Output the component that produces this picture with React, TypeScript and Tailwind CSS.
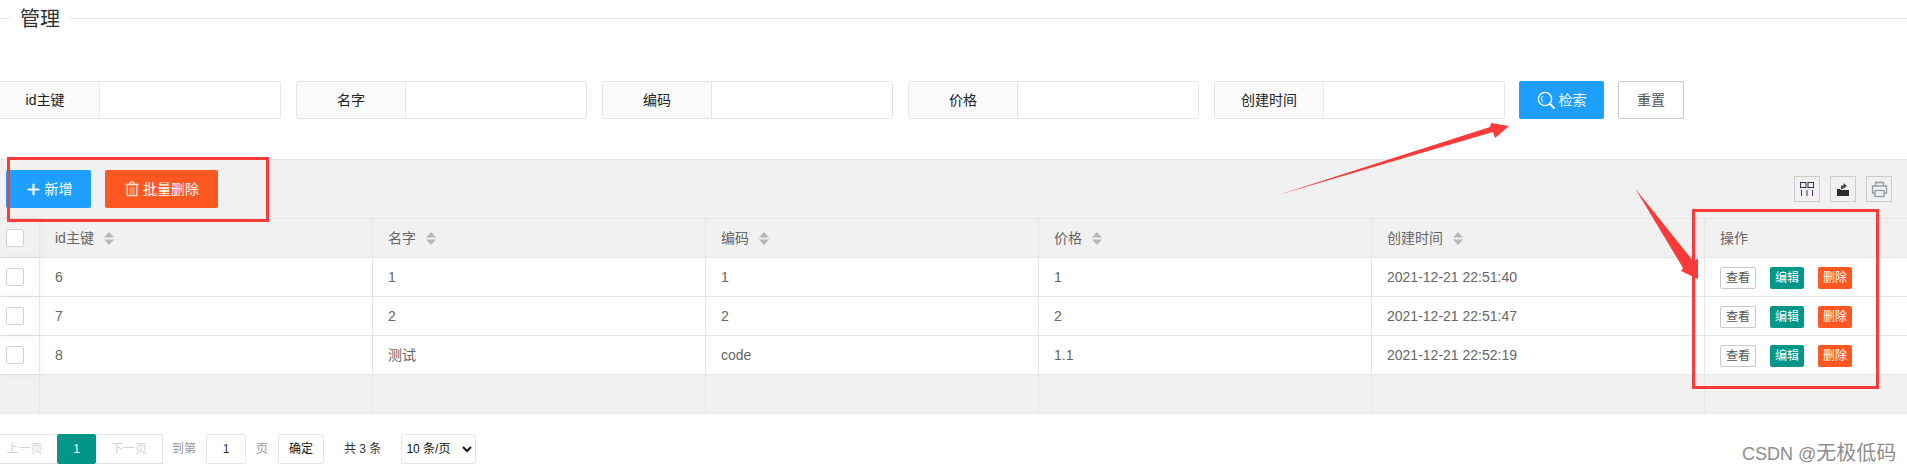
import { Plus } from 'lucide-react'

const filters = ['id主键', '名字', '编码', '价格', '创建时间']

const columns = ['id主键', '名字', '编码', '价格', '创建时间']

const rows = [
  ['6', '1', '1', '1', '2021-12-21 22:51:40'],
  ['7', '2', '2', '2', '2021-12-21 22:51:47'],
  ['8', '测试', 'code', '1.1', '2021-12-21 22:52:19'],
]

const gridCols = 'grid grid-cols-[40px_333px_333px_333px_333px_333px_1fr]'

function SortCaret() {
  return (
    <svg width="10" height="13" viewBox="0 0 10 13" className="ml-[10px] shrink-0">
      <path d="M5 0 L10 5.5 H0 Z" fill="#b8b8b8" />
      <path d="M5 13 L0 7.5 H10 Z" fill="#b8b8b8" />
    </svg>
  )
}

function Checkbox() {
  return <span className="block w-[18px] h-[18px] bg-white border border-[#d2d2d2] rounded-[2px] ml-[6px]" />
}

function FilterGroup({ label }: { label: string }) {
  return (
    <div className="flex w-[291px] h-[38px] shrink-0 border border-[#e6e6e6] rounded-[2px] bg-white">
      <label className="w-[109px] shrink-0 flex items-center justify-center bg-[#fafafa] border-r border-[#e6e6e6] text-[14px] text-[#222]">
        {label}
      </label>
      <input type="text" className="flex-1 min-w-0 outline-none" />
    </div>
  )
}

function ToolIcon({ children }: { children: React.ReactNode }) {
  return (
    <div className="w-[26px] h-[26px] border border-[#ccc] flex items-center justify-center">{children}</div>
  )
}

function Empty() {
  return (
    <>
      <div className="border-r border-[#e6e6e6]" />
      <div className="border-r border-[#e6e6e6]" />
      <div className="border-r border-[#e6e6e6]" />
      <div className="border-r border-[#e6e6e6]" />
      <div className="border-r border-[#e6e6e6]" />
      <div className="border-r border-[#e6e6e6]" />
      <div />
    </>
  )
}

export default function App() {
  return (
    <div className="relative w-[1907px] h-[471px] overflow-hidden bg-white font-['Liberation_Sans','Noto_Sans_CJK_SC',sans-serif]">
      {/* fieldset title */}
      <div className="flex items-center h-[37px]">
        <div className="w-[10px] h-px bg-[#e6e6e6]" />
        <span className="px-[10px] text-[20px] leading-[20px] text-[#333]">管理</span>
        <div className="flex-1 h-px bg-[#e6e6e6]" />
      </div>

      {/* search form */}
      <div className="flex items-center gap-[15px] -ml-[10px] mt-[44px] h-[38px]">
        {filters.map((f) => (
          <FilterGroup key={f} label={f} />
        ))}
        <div className="flex gap-[14px] -ml-px">
          <button className="w-[85px] h-[38px] bg-[#1e9fff] text-white text-[14px] rounded-[2px] flex items-center justify-center gap-[3px]">
            <svg width="19" height="19" viewBox="0 0 19 19" fill="none" stroke="#fff">
              <circle cx="8" cy="8" r="6.6" strokeWidth="1.3" />
              <path d="M12.8 12.8 L17.5 17.5" strokeWidth="2" />
              <path d="M6 4.8 A4 4 0 0 0 6 11" strokeWidth="1" />
            </svg>
            检索
          </button>
          <button className="w-[66px] h-[38px] bg-white border border-[#c9c9c9] text-[#555] text-[14px] rounded-[2px]">
            重置
          </button>
        </div>
      </div>

      {/* table toolbar */}
      <div className="mt-[40px] h-[60px] bg-[#f1f1f1] border-t border-b border-[#e6e6e6] flex items-center justify-between pl-[6px] pr-[15px]">
        <div className="flex gap-[14px]">
          <button className="w-[85px] h-[38px] bg-[#1e9fff] text-white text-[14px] rounded-[2px] flex items-center justify-center gap-[3px]">
            <Plus size={17} strokeWidth={3} />
            新增
          </button>
          <button className="w-[113px] h-[38px] bg-[#ff5722] text-white text-[14px] rounded-[2px] flex items-center justify-center gap-[3px]">
            <svg width="16" height="16" viewBox="0 0 16 16" fill="none" stroke="#ffe3d8">
              <path d="M1.5 3.5 H14.5" strokeWidth="1.6" />
              <path d="M5.5 3 L6.5 1.2 H9.5 L10.5 3" strokeWidth="1.2" />
              <path d="M3.2 4.5 V14.5 H12.8 V4.5" strokeWidth="1.3" />
              <path d="M6 6 V13 M8 6 V13 M10 6 V13" stroke="#ffc08a" strokeWidth="1" />
            </svg>
            批量删除
          </button>
        </div>
        <div className="flex gap-[10px]">
          <ToolIcon>
            <svg width="16" height="16" viewBox="0 0 16 16" fill="none">
              <rect x="1.5" y="1.5" width="5.5" height="5" stroke="#3b2a4a" />
              <rect x="9" y="1.5" width="5.5" height="5" stroke="#3b2a4a" />
              <path d="M2.5 9 V15 M8 9 V15 M13.5 9 V15" stroke="#5a2a6a" />
            </svg>
          </ToolIcon>
          <ToolIcon>
            <svg width="16" height="16" viewBox="0 0 16 16">
              <path d="M2 8 H5 L6 9 H14 V15 H2 Z" fill="#2b2b2b" />
              <path d="M6 8 V4.5 H8.5 V2 L12 5 L8.5 8 V6.5 H8 V8 Z" fill="#4a4a4a" />
            </svg>
          </ToolIcon>
          <ToolIcon>
            <svg width="17" height="17" viewBox="0 0 17 17" fill="none" stroke="#8f9aa3" strokeWidth="1.3">
              <path d="M4.5 5 V1.5 H12.5 V5" />
              <path d="M4 12 H1.5 V5 H15.5 V12 H13" />
              <rect x="4" y="9.5" width="9" height="6" />
            </svg>
          </ToolIcon>
        </div>
      </div>

      {/* table */}
      <div className={`${gridCols} h-[39px] bg-[#f1f1f1] border-b border-[#e6e6e6] text-[14px] text-[#666]`}>
        <div className="flex items-center border-r border-[#e6e6e6] shadow-[1px_0_6px_rgba(0,0,0,0.06)]">
          <Checkbox />
        </div>
        {columns.map((c) => (
          <div key={c} className="flex items-center pl-[15px] border-r border-[#e6e6e6]">
            {c}
            <SortCaret />
          </div>
        ))}
        <div className="flex items-center pl-[15px]">操作</div>
      </div>
      {rows.map((r) => (
        <div key={r[0]} className={`${gridCols} h-[39px] border-b border-[#e6e6e6] text-[14px] text-[#666]`}>
          <div className="flex items-center border-r border-[#e6e6e6] shadow-[1px_0_6px_rgba(0,0,0,0.06)]">
            <Checkbox />
          </div>
          {r.map((v, i) => (
            <div key={i} className="flex items-center pl-[15px] border-r border-[#e6e6e6]">
              {v}
            </div>
          ))}
          <div className="flex items-center pl-[15px] pt-[2px] gap-[14px] text-[12px]">
            <button className="w-[36px] h-[22px] bg-white border border-[#c9c9c9] text-[#555] rounded-[2px]">查看</button>
            <button className="w-[34px] h-[22px] bg-[#009688] text-white rounded-[2px]">编辑</button>
            <button className="w-[34px] h-[22px] bg-[#ff5722] text-white rounded-[2px]">删除</button>
          </div>
        </div>
      ))}
      <div className={`${gridCols} h-[39px] bg-[#f1f1f1] border-b border-[#e6e6e6]`}>
        <Empty />
      </div>

      {/* pagination */}
      <div className="flex items-center -ml-[9px] mt-[20px] h-[30px] text-[12px] text-[#333]">
        <span className="w-[66px] h-[30px] flex items-center justify-center bg-white border border-[#e2e2e2] border-r-0 text-[#d2d2d2]">上一页</span>
        <span className="w-[39px] h-[30px] flex items-center justify-center bg-[#009688] text-white rounded-[2px]">1</span>
        <span className="w-[67px] h-[30px] flex items-center justify-center bg-white border border-[#e2e2e2] border-l-0 text-[#d2d2d2]">下一页</span>
        <span className="ml-[9px] text-[#999]">到第</span>
        <input readOnly value="1" className="ml-[10px] w-[40px] h-[30px] border border-[#e6e6e6] rounded-[2px] text-center outline-none" />
        <span className="ml-[10px] text-[#999]">页</span>
        <button className="ml-[10px] w-[46px] h-[30px] bg-white border border-[#e6e6e6] rounded-[2px] text-[#111]">确定</button>
        <span className="ml-[20px] text-[#333]">共 3 条</span>
        <select className="ml-[20px] w-[75px] h-[30px] bg-white border border-[#e6e6e6] rounded-[2px] outline-none text-[#111]">
          <option>10 条/页</option>
        </select>
      </div>

      <div className="absolute left-[1742px] top-[441px] text-[20px] leading-[24px] text-[#8d8d8d] whitespace-nowrap">
        <span className="text-[18px]">CSDN @</span>无极低码
      </div>

      {/* red annotations over the page */}
      <div className="absolute left-[7px] top-[157px] w-[262px] h-[65px] border-[3px] border-[#fb3a3a]" />
      <div className="absolute left-[1692px] top-[209px] w-[187px] h-[180px] border-[3px] border-[#fb3a3a]" />
      <svg width="1907" height="471" className="absolute left-0 top-0 pointer-events-none">
        <polygon points="1278,195 1490,127 1491,123 1509,126 1495,138 1493,132" fill="#fb3a3a" />
        <polygon points="1635.5,189 1694,262 1698,258 1698,279 1681,271 1683,268" fill="#fb3a3a" />
      </svg>
    </div>
  )
}
